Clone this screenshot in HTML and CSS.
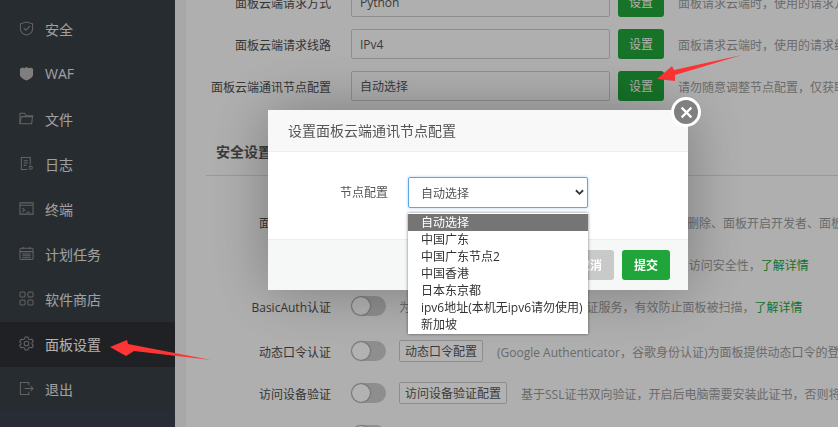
FILE: index.html
```html
<!DOCTYPE html>
<html lang="zh-CN">
<head>
<meta charset="utf-8">
<title>面板设置</title>
<link rel="stylesheet" href="styles.css">
</head>
<body>
<div class="app">
  <nav class="sidebar">
    <ul class="menu">
      <li class="menu-item"><svg class="ico" viewBox="0 0 16 16"><path d="M8 1l6.500 2v5.500c0 3-3 5.500-6.500 6.500-3.500-1-6.500-3.500-6.500-6.500V3z"/><path d="M5 7.500l2.300 2.300L11.500 5.500"/></svg>安全</li>
      <li class="menu-item"><svg class="ico" viewBox="0 0 16 16"><path class="fill" d="M1 3l3-1.500 1.500 1L8 1l2.500 1.500L12 1.500 15 3v6c0 3-3.500 5-7 6.500C4.500 14 1 12 1 9z"/></svg>WAF</li>
      <li class="menu-item"><svg class="ico" viewBox="0 0 16 16"><path d="M1 13.500V2.500h5l1.500 2.500h7L13.500 13.500z"/><path d="M1 13.500L2.500 6H15"/></svg>文件</li>
      <li class="menu-item"><svg class="ico" viewBox="0 0 16 16"><path d="M12 9V1.500H2.500v13H9"/><path d="M5 5h4.500M5 7.500h4.500M5 10h3"/><circle cx="12.500" cy="12.500" r="1.700"/></svg>日志</li>
      <li class="menu-item"><svg class="ico" viewBox="0 0 16 16"><path d="M1 2h14v12H1zM1 4.500h14"/><path d="M3.500 7.500L6 9.500l-2.500 2M8 12h3.500"/></svg>终端</li>
      <li class="menu-item"><svg class="ico" viewBox="0 0 16 16"><rect x="1" y="2.500" width="14" height="12" rx="1.500"/><path d="M4.500 1v2.500M11.500 1v2.500M1 6h14M3.500 8.500h9M3.500 10.500h9M3.500 12.500h9"/></svg>计划任务</li>
      <li class="menu-item"><svg class="ico" viewBox="0 0 16 16"><rect x="1" y="1" width="5.500" height="5.500" rx="1.500"/><rect x="9.500" y="1" width="5.500" height="5.500" rx="1.500"/><rect x="1" y="9.500" width="5.500" height="5.500" rx="1.500"/><rect x="9.500" y="9.500" width="5.500" height="5.500" rx="1.500"/></svg>软件商店</li>
      <li class="menu-item active"><svg class="ico" viewBox="0 0 16 16"><path d="M6.500 1h3l.5 2 1.800 1 2-.6 1.500 2.600-1.500 1.400v1.200l1.500 1.400-1.500 2.600-2-.6-1.800 1-.5 2h-3l-.5-2-1.800-1-2 .6L.7 10l1.500-1.400V7.400L.7 6l1.500-2.600 2 .6 1.800-1z"/><circle cx="8" cy="8" r="2.500"/></svg>面板设置</li>
      <li class="menu-item"><svg class="ico" viewBox="0 0 16 16"><path d="M10.500 4.500V1.500H1.500v13h9v-3"/><path d="M6 8h9M12.500 5.500L15 8l-2.500 2.500"/></svg>退出</li>
    </ul>
  </nav>
  <main class="content">
    <div class="panel">
      <section class="settings">
        <div class="row"><label class="label">面板云端请求方式</label><div class="input">Python</div><button class="btn-green">设置</button><p class="desc">面板请求云端时，使用的请求方式，默认Python</p></div>
        <div class="row"><label class="label">面板云端请求线路</label><div class="input">IPv4</div><button class="btn-green">设置</button><p class="desc">面板请求云端时，使用的请求线路，默认IPv4</p></div>
        <div class="row"><label class="label">面板云端通讯节点配置</label><div class="input">自动选择</div><button class="btn-green">设置</button><p class="desc">请勿随意调整节点配置，仅获取云端数据异常时使用</p></div>
      </section>
      <h2 class="heading">安全设置</h2>
      <section class="settings security">
        <div class="row"><label class="label">面板开发模式</label><span class="toggle"></span><p class="desc">开启后将取消面板的部分安全限制，请谨慎操作，避免删除、面板开启开发者、面板调试</p></div>
        <div class="row"><label class="label">面板SSL</label><span class="toggle"></span><p class="desc">为面板配置SSL证书，&nbsp;&nbsp;加密面板的传输数据，提高面板访问安全性，<a class="link">了解详情</a></p></div>
        <div class="row"><label class="label">BasicAuth认证</label><span class="toggle"></span><p class="desc">为面板开启BasicAuth的安全登录认证服务，有效防止面板被扫描，<a class="link">了解详情</a></p></div>
        <div class="row row-spaced"><label class="label">动态口令认证</label><span class="toggle"></span><button class="btn-outline">动态口令配置</button><p class="desc">(Google Authenticator，谷歌身份认证)为面板提供动态口令的登录验证</p></div>
        <div class="row"><label class="label">访问设备验证</label><span class="toggle"></span><button class="btn-outline">访问设备验证配置</button><p class="desc">基于SSL证书双向验证，开启后电脑需要安装此证书，否则将无法访问面板</p></div>
        <div class="row"><label class="label">&nbsp;</label><span class="toggle"></span></div>
      </section>
    </div>
  </main>
</div>

<div class="shade"></div>
<svg class="arrow arrow-side" viewBox="0 0 110 24"><polygon points="0,9 17,2 18,6 101,22 24,13 16,18"/></svg>
<svg class="arrow arrow-top" viewBox="0 0 90 30"><polygon points="0,26 15,13 17,17 85,2 18,22 18,28"/></svg>

<div class="modal">
  <header class="modal-head">设置面板云端通讯节点配置</header>
  <div class="modal-body">
    <span class="field-label">节点配置</span>
    <div class="select">自动选择
      <svg class="chevron" viewBox="0 0 10 7"><path d="M1 1l4 4 4-4"/></svg>
    </div>
  </div>
  <footer class="modal-foot">
    <button class="btn-cancel">取消</button>
    <button class="btn-submit">提交</button>
  </footer>
  <button class="close" aria-label="关闭"><svg viewBox="0 0 12 12"><path d="M1.500 1.500l9 9M10.500 1.500l-9 9"/></svg></button>
  <ul class="options">
    <li class="option selected">自动选择</li>
    <li class="option">中国广东</li>
    <li class="option">中国广东节点2</li>
    <li class="option">中国香港</li>
    <li class="option">日本东京都</li>
    <li class="option">ipv6地址(本机无ipv6请勿使用)</li>
    <li class="option">新加坡</li>
  </ul>
</div>
</body>
</html>
```
FILE: styles.css
```css
* { box-sizing: border-box; }
html, body { height: 100%; }
body {
  margin: 0;
  overflow: hidden;
  font-family: "Open Sans", "Noto Sans CJK SC", sans-serif;
  font-size: 12px;
  color: #555;
}
button { font-family: inherit; font-size: 12px; cursor: pointer; }
p, h2, ul { margin: 0; padding: 0; }
ul { list-style: none; }

.app { display: flex; height: 427px; overflow: hidden; }

.sidebar { width: 175px; flex: none; background: #3b404b; }
.menu { padding-top: 7px; background: #393f46; height: 411px; }
.menu-item {
  display: flex;
  align-items: center;
  gap: 11px;
  height: 45px;
  padding: 0 0 2px 19px;
  font-size: 14px;
  color: #e6e6e6;
}
.menu-item.active { background: #2d3036; color: #fff; }
.ico { width: 15px; height: 15px; flex: none; fill: none; stroke: #8e8e8e; stroke-width: 1.100; }
.ico .fill { fill: #b5b5b5; stroke: none; }

.content { flex: 1; min-width: 0; padding-left: 11px; background: #f1f1f1; }
.panel { height: 100%; background: #fbfbfb; overflow: hidden; padding-top: 1px; }
.settings { margin-top: -20px; }
.security { margin-top: 25px; }

.row { display: flex; align-items: center; height: 42px; white-space: nowrap; }
.row-spaced { margin-top: 3px; }
.label { width: 145px; flex: none; margin-right: 20px; padding-top: 1px; text-align: right; color: #4d4d4d; }
.input {
  width: 259px;
  height: 30px;
  flex: none;
  margin-right: 8px;
  padding-left: 8px;
  line-height: 30px;
  background: #fbfbfb;
  border: 1px solid #ccc;
  border-radius: 2px;
  color: #555;
}
.btn-green {
  width: 46px;
  height: 30px;
  flex: none;
  margin-right: 14px;
  padding: 0;
  background: #20a53a;
  border: 0;
  border-radius: 3px;
  color: #fff;
}
.desc { padding-top: 1px; color: #999; }
.link { color: #20a53a; }
.toggle {
  position: relative;
  width: 35px;
  height: 20px;
  flex: none;
  margin-right: 13px;
  background: #ccc;
  border-radius: 10px;
}
.toggle::after {
  content: "";
  position: absolute;
  left: 1px;
  top: 1px;
  width: 18px;
  height: 18px;
  background: #fff;
  border-radius: 50%;
  box-shadow: 0 0 2px rgba(0, 0, 0, .6);
}
.btn-outline {
  height: 22px;
  flex: none;
  margin-right: 14px;
  padding: 0 5px;
  background: #fff;
  border: 1px solid #ccc;
  border-radius: 2px;
  color: #555;
}

.heading {
  margin: 34px 0 0 20px;
  padding: 0 0 14px 10px;
  height: 35px;
  font-size: 14px;
  font-weight: 700;
  color: #555;
  border-bottom: 1px solid #ddd;
}

.shade { position: fixed; inset: 0; background: rgba(0, 0, 0, .3); }

.arrow { position: fixed; fill: #ff3434; }
.arrow-side { left: 110px; top: 338px; width: 110px; height: 24px; }
.arrow-top { left: 657px; top: 53px; width: 90px; height: 30px; }

.modal {
  position: fixed;
  left: 268px;
  top: 110px;
  width: 420px;
  height: 180px;
  display: flex;
  flex-direction: column;
  background: #fff;
  box-shadow: 0 0 60px rgba(0, 0, 0, .3);
}
.modal-head {
  height: 42px;
  flex: none;
  padding-left: 20px;
  line-height: 42px;
  font-size: 14px;
  color: #555;
  background: #f8f8f8;
  border-bottom: 1px solid #eee;
}
.modal-body { flex: 1; display: flex; align-items: flex-start; padding-top: 25px; }
.field-label { width: 120px; flex: none; margin-right: 20px; line-height: 32px; text-align: right; color: #555; }
.select {
  position: relative;
  width: 180px;
  height: 31px;
  padding-left: 12px;
  line-height: 31px;
  color: #555;
  background: #fff;
  border: 1px solid #5ba8e8;
  border-radius: 2px;
  box-shadow: 0 0 3px rgba(91, 168, 232, .5);
}
.chevron { position: absolute; right: 3px; top: 11px; width: 9px; height: 7px; fill: none; stroke: #333; stroke-width: 2; }
.modal-foot {
  height: 51px;
  flex: none;
  display: flex;
  justify-content: flex-end;
  align-items: center;
  gap: 8px;
  padding-right: 18px;
  background: #f6f8f8;
  border-top: 1px solid #eee;
}
.btn-cancel, .btn-submit {
  height: 30px;
  width: 48px;
  padding: 0;
  border: 0;
  border-radius: 3px;
  font-weight: 700;
  color: #fff;
}
.btn-cancel { background: #c9c9c9; }
.btn-submit { background: #20a53a; }

.close {
  position: absolute;
  right: -13px;
  top: -13px;
  width: 30px;
  height: 30px;
  display: flex;
  align-items: center;
  justify-content: center;
  padding: 0;
  background: #808080;
  border: 3px solid #fff;
  border-radius: 50%;
}
.close svg { width: 13px; height: 13px; fill: none; stroke: #fff; stroke-width: 2; }

.options {
  position: absolute;
  left: 140px;
  top: 103px;
  width: 180px;
  padding: 1px 0;
  background: #fff;
  box-shadow: 0 0 3px rgba(0, 0, 0, .5);
  z-index: 1;
}
.option { height: 17px; padding-left: 13px; line-height: 17px; color: #333; white-space: nowrap; }
.option.selected { background: #757575; color: #fff; }
```
